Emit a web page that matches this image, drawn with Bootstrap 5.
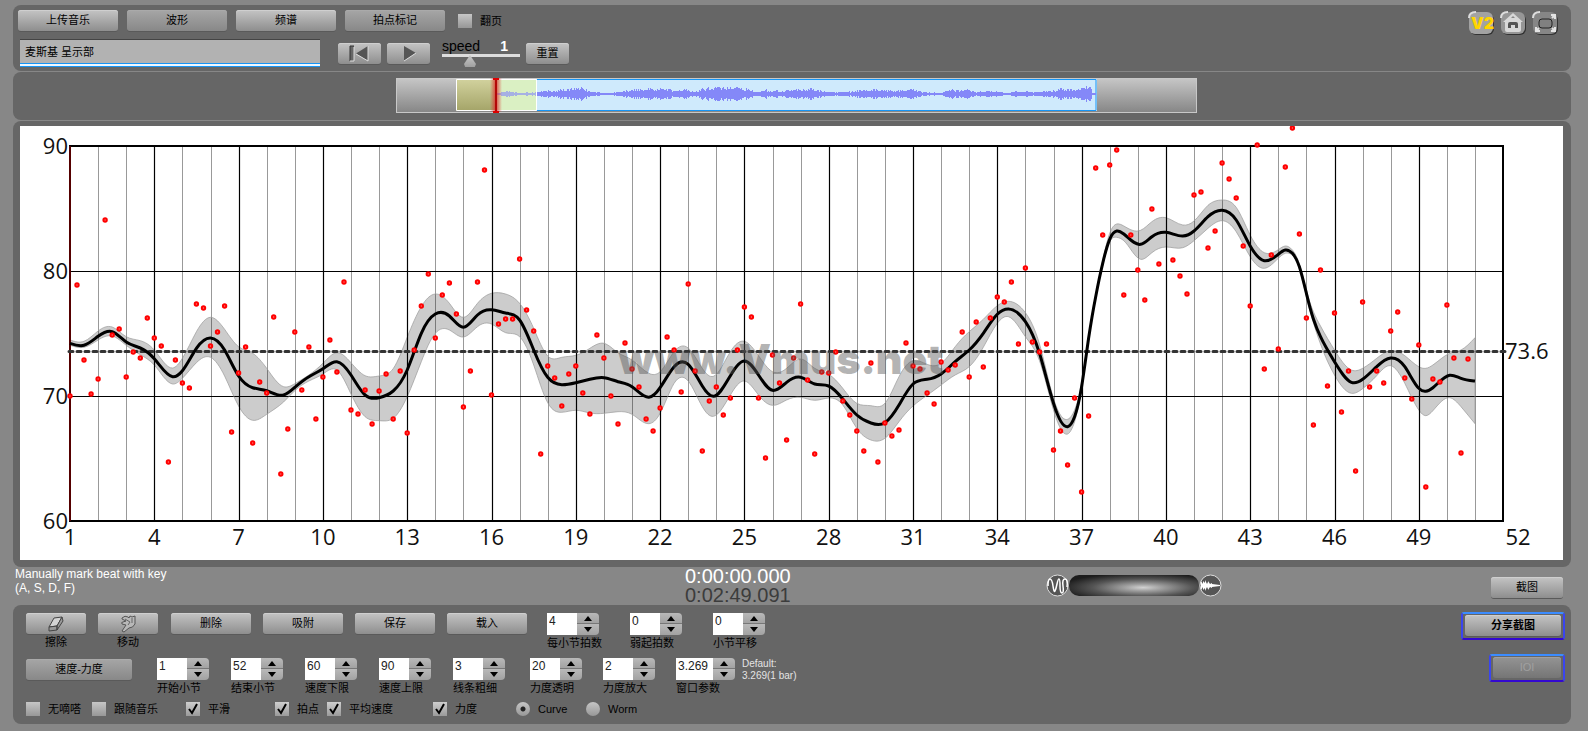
<!DOCTYPE html>
<html lang="zh-CN">
<head>
<meta charset="utf-8">
<meta name="viewport" content="width=device-width, initial-scale=1">
<title>Vmus.net</title>
<link href="https://cdn.jsdelivr.net/npm/bootstrap@5.3.0/dist/css/bootstrap.min.css" rel="stylesheet">
<style>
body{background:#878787;color:#000;font-family:"Liberation Sans","Noto Sans CJK SC",sans-serif;font-size:11px;line-height:16px;padding:5px 17px 7px 13px}
.panel{background:#666;border-radius:8px}
.panel+.panel{margin-top:1px}
.gbtn{height:21px;padding:0;border:0;border-radius:3px;font-size:11px;line-height:21px;color:#000;background:linear-gradient(#c4c4c4,#8e8e8e);box-shadow:inset 0 1px 0 #cfcfcf,0 1px 0 #5a5a5a;text-align:center;flex:none;display:flex;align-items:center;justify-content:center}
.gbtn.pressed{background:linear-gradient(#a6a6a6,#888);box-shadow:inset 0 1px 0 #aaa,0 1px 0 #5a5a5a}
.w100{width:100px}.w80{width:80px}.w60{width:60px}.w43{width:43px}.w106{width:106px}.w72{width:72px}
.transport{padding:5px 5px 4px}
.gap-9{gap:9px}
.player{gap:6px;padding-left:2px}
.title-box{width:300px;height:28px;margin-right:12px;padding:0 5px 5px;border:0;border-top:1px solid #444;border-bottom:1px solid #1795f5;box-shadow:inset 0 -2px 0 #f0f8ff,inset 0 -3px 0 #1795f5;background:#b2b2b2;border-radius:0;font-size:11px;color:#000}
.tick{appearance:none;width:14px;height:14px;margin:0;flex:none;background:linear-gradient(#c6c6c6,#979797);border:0}
.tick:checked{background:url("data:image/svg+xml,%3Csvg xmlns='http://www.w3.org/2000/svg' viewBox='0 0 14 14'%3E%3Cpath d='M3 7l3 4 5-9' fill='none' stroke='%23000' stroke-width='2'/%3E%3C/svg%3E"),linear-gradient(#cecece,#9a9a9a)}
.tick[type=radio]{border-radius:50%}
.tick[type=radio]:checked{background:radial-gradient(circle,#222 0 2px,transparent 3px),linear-gradient(#c6c6c6,#979797)}
.opt{display:flex;align-items:center;gap:8px;flex:none}
.speed{width:78px;height:28px;margin-left:6px;font-size:14px;line-height:14px}
.speed input{appearance:none;display:block;width:78px;height:14px;margin:0;background:linear-gradient(#ddd,#ddd) 0 1px/100% 3px no-repeat}
.speed input::-webkit-slider-thumb{appearance:none;width:12px;height:12px;margin-top:2px;background:linear-gradient(#c8c8c8,#a0a0a0);clip-path:polygon(50% 0,100% 75%,90% 100%,10% 100%,0 75%)}
.tools{gap:6px;padding:6px 13px 0 0}
.tool-ico{width:26px;height:24px;padding:0;border:0;background:none}
.overview{padding:6px 0 7px 8px}
.wave-box{width:52%;max-width:801px;flex:none}
.wave-box svg,.plot svg{display:block;width:100%;height:auto}
.plot-panel{padding:5px 8px 7px 7px}
.plot{background:#fff}
.status{display:grid;grid-template-columns:minmax(160px,672fr) minmax(110px,361fr) minmax(180px,445fr) auto;height:38px;align-items:start;padding-right:8px}
.note{font-size:12px;line-height:14px;padding-left:2px}
.clock{font-size:20px;line-height:19px}
.total{color:#3c3c3c}
.vol{padding-top:7px}
.knob{appearance:none;width:130px;height:21px;border-radius:10px;background:radial-gradient(ellipse at 57% 60%,#d2d2d2 0,#a0a0a0 18%,#555 48%,#1c1c1c 80%);margin:0}
.knob::-webkit-slider-thumb{appearance:none;width:1px;height:1px}
.shot{margin-top:10px}
.bottom{padding:8px 6px 7px 13px}
.row-a{gap:12px;height:45px}
.edit-btns{gap:12px;margin-left:1px}
.steps-a{margin-left:8px}
.row-b{height:43px}
.row-b>.gbtn{margin-top:1px}
.steps-b{margin-left:25px}
.steps-c{margin-left:3px}
.cell-a{width:83px;flex:none}
.cell-b{width:74px;flex:none}
.cell-c{width:73px;flex:none}
.cell-c:last-child{width:66px}
.spin{height:22px}
.spin input{width:30px;height:22px;border:0;border-radius:0;padding:0 0 6px 2px;font-size:12px;line-height:16px;color:#222;background:#fff}
.spin input.wide{width:37px}
.spin .updown{width:22px;display:flex;flex-direction:column}
.spin button{height:11px;border:0;padding:0;width:22px;background:linear-gradient(#b9b9b9,#a2a2a2);display:flex;align-items:center;justify-content:center}
.spin button:first-child{border-radius:0 4px 0 0;border-bottom:1px solid #777}
.spin button:last-child{border-radius:0 0 4px 0}
.cap{line-height:16px;white-space:nowrap;display:block}
.hint{font-size:10px;line-height:12px;color:#e4e4e4}
.row-c{display:grid;grid-template-columns:66px 94px 89px 52px 106px 83px 70px 70px;height:16px;align-items:center}
.share-col{gap:14px;margin-top:-1px}
.share{border:2px solid;border-color:#3b8cff #3a45f0 #3308d0;border-radius:3px;padding:1px 2px 2px;width:104px}
.share.small-one{width:76px}
.share .gbtn{width:100%}
.share .gbtn:disabled{background:linear-gradient(#949494,#757575);color:#a0a0a0;box-shadow:inset 0 1px 0 #a0a0a0}
</style>
</head>
<body>
<header class="panel d-flex justify-content-between">
  <div class="transport">
    <div class="d-flex align-items-center gap-9">
      <button class="gbtn w100" type="button">上传音乐</button>
      <button class="gbtn w100 pressed" type="button">波形</button>
      <button class="gbtn w100" type="button">频谱</button>
      <button class="gbtn w100 pressed" type="button">拍点标记</button>
      <label class="opt ms-1"><input class="tick" type="checkbox">翻页</label>
    </div>
    <div class="d-flex align-items-center mt-2 player">
      <input class="title-box" type="text" value="麦斯基 呈示部" aria-label="曲目">
      <button class="gbtn w43" type="button" aria-label="回到开头"><svg width="26" height="17" viewBox="0 0 26 17"><path d="M3 1h4v15H3z" fill="#666"/><path d="M3 16V1h4" fill="none" stroke="#333"/><path d="M21 1v15L9 8.500z" fill="#555"/><path d="M9 9l12 7V1M3 16h4V2" fill="none" stroke="#ddd"/></svg></button>
      <button class="gbtn w43" type="button" aria-label="播放"><svg width="26" height="17" viewBox="0 0 26 17"><path d="M8 1l12 7-12 8z" fill="#555"/><path d="M8 16l12-8" stroke="#ddd"/></svg></button>
      <div class="speed">
        <div class="d-flex"><label for="sp">speed</label><output class="text-white fw-bold ms-3 ps-1" for="sp">1</output></div>
        <input id="sp" type="range" min="0" max="3" step="0.1" value="1">
      </div>
      <button class="gbtn w43" type="button">重置</button>
    </div>
  </div>
  <nav class="d-flex tools" aria-label="工具">
    <button class="tool-ico" type="button"><svg width="26" height="24" viewBox="0 0 26 24"><rect x="2" y="3" width="24" height="21" rx="6" fill="#333"/><rect x="1" y="1" width="24" height="22" rx="6" fill="#a2a2a2"/><path d="M1 7q0-6 7-6" fill="none" stroke="#ddd" stroke-width="2"/><text x="3" y="18" font-family="Inter,sans-serif" font-weight="900" font-size="16" fill="#ffd500">V2</text></svg></button>
    <button class="tool-ico" type="button" aria-label="主页"><svg width="26" height="24" viewBox="0 0 26 24"><rect x="2" y="3" width="24" height="21" rx="6" fill="#333"/><rect x="1" y="1" width="24" height="22" rx="6" fill="#969696"/><path d="M1 7q0-6 7-6" fill="none" stroke="#ddd" stroke-width="2"/><path d="M3 11L13 2l10 9h-2v8q0 2-2 2H7q-2 0-2-2v-8z" fill="#d8d8d8"/><path d="M8 17v-4q0-2 2-2h6q2 0 2 2v4h-3v-3h-4v3z" fill="#555"/><path d="M11 7l2-2 2 2z" fill="#888"/></svg></button>
    <button class="tool-ico" type="button" aria-label="全屏"><svg width="26" height="24" viewBox="0 0 26 24"><rect x="2" y="3" width="24" height="21" rx="6" fill="#333"/><rect x="1" y="1" width="24" height="22" rx="6" fill="#868686"/><path d="M1 7q0-6 7-6" fill="none" stroke="#ddd" stroke-width="2"/><rect x="7" y="8" width="13" height="9" rx="3" fill="#808080" stroke="#222"/><path d="M19 4h4v4M4 16v4h4M23 16v4h-4M4 20l3-3M23 20l-3-3M23 4l-3 3" fill="none" stroke="#e4e4e4" stroke-width="2"/></svg></button>
  </nav>
</header>

<section class="panel d-flex justify-content-center overview">
  <div class="wave-box">
    <svg viewBox="0 0 801 35" aria-label="波形总览">
      <defs>
        <linearGradient id="ga" x2="0" y2="1"><stop stop-color="#c6c6c6"/><stop offset="1" stop-color="#868686"/></linearGradient>
        <linearGradient id="gy" x2="0" y2="1"><stop stop-color="#d2d29e"/><stop offset="1" stop-color="#a4a468"/></linearGradient>
        <linearGradient id="gr"><stop stop-color="#d33" stop-opacity="0"/><stop offset=".5" stop-color="#d22" stop-opacity=".8"/><stop offset="1" stop-color="#d33" stop-opacity="0"/></linearGradient>
      </defs>
      <rect x=".5" y=".5" width="800" height="34" fill="url(#ga)" stroke="#c8c8c8"/>
      <rect x="141" y="1" width="560" height="32" fill="#cfeafc"/>
      <path d="M141 1.500H700V32.500H141" fill="none" stroke="#1795f5" stroke-width="1"/>
      <rect x="100" y="1.500" width="41" height="31" fill="#daf0c4"/>
      <path id="wave" fill="#8488f8"/>
      <rect x="100" y="1.500" width="41" height="31" fill="#daf0c4" opacity=".4"/>
      <rect x="60" y="1" width="40" height="32" fill="url(#gy)"/>
      <path d="M60.500 1.500H140.500V32.500H60.500z" fill="none" stroke="#fff" stroke-width="1"/>
      <rect x="94" y="0" width="12" height="34" fill="url(#gr)"/>
      <path d="M100 0v35M97 1h6M97 34h6" stroke="#d00" stroke-width="2"/><path d="M100 2v31" stroke="#811"/>
    </svg>
  </div>
</section>

<main class="panel plot-panel">
  <div class="plot"><svg id="chart" viewBox="0 0 1543 434" role="img" aria-label="速度曲线"></svg></div>
</main>

<section class="status">
  <div class="text-white note">Manually mark beat with key<br>(A, S, D, F)</div>
  <div class="clock"><div class="text-white">0:00:00.000</div><div class="total">0:02:49.091</div></div>
  <div class="d-flex align-items-center vol">
    <svg width="23" height="23" viewBox="0 0 23 23"><circle cx="11.500" cy="11.500" r="10.500" fill="#555" stroke="#ddd"/><path d="M2 12Q2 5 4 5T7 12T9 17T11 10T13 5T14 12T16 19T17 12T19 5T21 13" fill="none" stroke="#fff" stroke-width="1.500"/></svg>
    <input class="knob" type="range" aria-label="混合">
    <svg width="23" height="23" viewBox="0 0 23 23"><circle cx="11.500" cy="11.500" r="10.500" fill="#555" stroke="#ddd"/><path d="M2 7l2 3V7l2 2V6l2 4V8l1 2V7l2 3 2-1v1l8 1v1l-8 1v1l-2-1-2 3v-3l-1 2v-2l-2 4v-3l-2 2v-3l-2 3z" fill="#fff"/></svg>
  </div>
  <button class="gbtn w72 shot" type="button">截图</button>
</section>

<footer class="panel d-flex justify-content-between bottom">
  <form>
    <div class="d-flex row-a">
      <div class="w60 text-center"><button class="gbtn w60" type="button" aria-labelledby="er"><svg width="18" height="16" viewBox="0 0 18 16"><path d="M2 11L7 2l8-1-5 9z" fill="#d4d4d4" stroke="#444"/><path d="M2 11l8-1v4l-8 1zM10 10l5-9 1 4-6 9z" fill="#999" stroke="#444"/></svg></button><span class="cap" id="er">擦除</span></div>
      <div class="w60 text-center"><button class="gbtn w60" type="button" aria-labelledby="mv"><svg width="20" height="18" viewBox="0 0 20 18"><path d="M4 3q3-3 6-1l1 1 1-2 2 1 3-1v8q-2 4-6 4l-5 4-2-1 4-6-4-1q-1-2 1-2l3-1-4-2z" fill="#b8b8b8" stroke="#555"/><path d="M7 4l5 3-2 3M14 3v5" fill="none" stroke="#666"/></svg></button><span class="cap" id="mv">移动</span></div>
      <div class="d-flex edit-btns">
        <button class="gbtn w80" type="button">删除</button>
        <button class="gbtn w80" type="button">吸附</button>
        <button class="gbtn w80" type="button">保存</button>
        <button class="gbtn w80" type="button">载入</button>
      </div>
      <div class="d-flex steps-a" data-steps='[["每小节拍数","4"],["弱起拍数","0"],["小节平移","0"]]' data-cell="cell-a"></div>
    </div>
    <div class="d-flex row-b">
      <button class="gbtn w106 pressed" type="button">速度-力度</button>
      <div class="d-flex steps-b" data-steps='[["开始小节","1"],["结束小节","52"],["速度下限","60"],["速度上限","90"],["线条粗细","3"]]' data-cell="cell-b"></div>
      <div class="d-flex steps-c" data-steps='[["力度透明","20"],["力度放大","2"],["窗口参数","3.269"]]' data-cell="cell-c"></div>
      <div class="hint">Default:<br>3.269(1 bar)</div>
    </div>
    <div class="row-c">
      <label class="opt"><input class="tick" type="checkbox">无嘀嗒</label>
      <label class="opt"><input class="tick" type="checkbox">跟随音乐</label>
      <label class="opt"><input class="tick" type="checkbox" checked>平滑</label>
      <label class="opt"><input class="tick" type="checkbox" checked>拍点</label>
      <label class="opt"><input class="tick" type="checkbox" checked>平均速度</label>
      <label class="opt"><input class="tick" type="checkbox" checked>力度</label>
      <label class="opt"><input class="tick" type="radio" name="kind" checked>Curve</label>
      <label class="opt"><input class="tick" type="radio" name="kind">Worm</label>
    </div>
  </form>
  <div class="d-flex flex-column align-items-end share-col">
    <div class="share"><button class="gbtn fw-bold" type="button">分享截图</button></div>
    <div class="share small-one"><button class="gbtn" type="button" disabled>IOI</button></div>
  </div>
</footer>

<script src="https://cdn.jsdelivr.net/npm/bootstrap@5.3.0/dist/js/bootstrap.bundle.min.js"></script>
<script>
// steppers
document.querySelectorAll('[data-steps]').forEach(function (box, b) {
  JSON.parse(box.dataset.steps).forEach(function (s, i) {
    var id = 'st' + b + i;
    box.insertAdjacentHTML('beforeend', '<div class="' + box.dataset.cell + '"><div class="spin d-flex"><input type="text" id="' + id + '" value="' + s[1] + '"' + (s[1].length > 3 ? ' class="wide"' : '') + '><span class="updown"><button type="button" aria-label="+"><svg width="8" height="5"><path d="M0 5L4 0l4 5z"/></svg></button><button type="button" aria-label="-"><svg width="8" height="5"><path d="M0 0h8L4 5z"/></svg></button></span></div><label class="cap" for="' + id + '">' + s[0] + '</label></div>');
  });
});

// overview waveform: [x, half height]
var env = [[100,1],[112,3],[125,1],[140,2],[150,3],[160,3],[165,4],[175,5],[185,6],[190,4],[195,2],[215,1],[222,2],[235,4],[250,5],[270,5],[280,3],[290,5],[298,2],[305,5],[312,6],[340,6],[352,5],[360,2],[370,4],[385,3],[400,4],[415,5],[430,2],[450,2],[470,4],[485,4],[500,3],[515,5],[525,2],[545,1],[552,4],[570,4],[580,2],[600,3],[612,1],[620,3],[640,2],[655,3],[665,5],[680,4],[690,7],[694,7],[696,1],[700,1]];
var w = '', k = 0, seed = 7;
for (var x = 100; x < 700; x++) {
  while (env[k + 1][0] <= x) k++;
  var a = env[k], c = env[k + 1], h = a[1] + (c[1] - a[1]) * (x - a[0]) / (c[0] - a[0]);
  seed = (seed * 137 + 29) % 251;
  h = Math.max(1, Math.round(h * (.6 + seed / 251 * .6)));
  w += 'M' + x + ' ' + (16 - h) + 'h1v' + 2 * h + 'h-1z';
}
document.getElementById('wave').setAttribute('d', w);

// tempo chart; band samples are [bar, mean, upper, lower] on a grid three times finer than the drawing
var X0 = 50, BAR = 28.1;
function px(m) { return X0 + (m - 1) * BAR; }
var band = [[1,670,660,676],[1.5,676,664,682],[2,649,633,660],[2.5,635,621,648],[3,666,650,676],[3.5,684,662,704],[4,716,690,735],[4.65,770,744,792],[5,752,715,775],[5.5,685,635,728],[6,654,592,712],[6.5,690,628,768],[7,768,680,858],[7.5,803,700,901],[8,812,745,883],[8.6,825,800,846],[9,802,791,812],[9.5,770,765,783],[10,746,730,762],[10.5,725,698,750],[11,765,728,822],[11.5,825,767,890],[12,833,768,902],[12.5,813,746,895],[13,750,652,830],[13.5,640,560,725],[14,582,522,640],[14.5,588,550,630],[15,622,592,651],[15.5,585,550,620],[16,569,520,612],[16.5,579,522,638],[17,600,550,650],[17.5,690,625,735],[18,772,708,848],[18.5,794,712,877],[19,788,706,871],[19.5,778,685,879],[20,773,670,880],[20.5,785,698,875],[21,800,720,883],[21.6,832,760,911],[22,803,755,880],[22.5,740,695,790],[23,733,684,783],[23.5,798,745,860],[23.9,829,769,889],[24.5,767,695,825],[25,723,664,783],[25.5,765,707,825],[26,811,755,856],[26.5,787,745,840],[27,772,717,832],[27.5,792,745,841],[28,798,763,834],[28.5,837,805,855],[29,885,850,925],[29.5,909,857,960],[30,908,850,955],[30.5,855,770,905],[31,792,722,858],[31.5,778,733,826],[32,762,730,795],[32.5,725,680,765],[33,690,635,740],[33.5,640,598,682],[34,583,557,610],[34.4,567,544,590],[35,605,578,650],[35.5,700,672,722],[36,850,835,870],[36.5,920,898,942],[36.75,890,870,905],[37,800,790,806],[37.25,655,650,660],[37.5,530,525,535],[37.75,430,422,437],[38,358,340,365],[38.25,333,312,352],[38.5,342,318,362],[39.1,373,331,418],[39.5,350,305,398],[40,337,293,381],[40.6,348,315,383],[41,333,303,362],[41.5,290,256,325],[42,271,240,302],[42.5,300,262,335],[43,378,345,410],[43.5,422,398,445],[44,403,389,415],[44.25,390,378,400],[44.5,400,390,406],[44.75,440,432,446],[45,520,512,530],[45.25,597,575,608],[45.5,650,618,672],[46,725,690,765],[46.6,787,750,820],[47,778,745,806],[47.5,740,715,767],[48,714,692,737],[48.5,740,707,790],[49,805,740,870],[49.25,814,745,887],[49.5,803,735,872],[50.1,766,700,833],[50.5,775,690,860],[51,783,653,911]];
function pts(i) { return band.map(function (r) { return [px(r[0]), (r[i] - 18) / 3]; }); }
// natural cubic spline through all points, written as Bezier segments
function curve(p) {
  var n = p.length, i, cp = [], dp = [], s = [], out = '';
  for (i = 0; i < n; i++) {
    var hl = i ? 1 / (p[i][0] - p[i - 1][0]) : 0, hr = i < n - 1 ? 1 / (p[i + 1][0] - p[i][0]) : 0;
    var r = 3 * ((i ? (p[i][1] - p[i - 1][1]) * hl * hl : 0) + (i < n - 1 ? (p[i + 1][1] - p[i][1]) * hr * hr : 0));
    var q = 2 * (hl + hr) - (i ? hl * cp[i - 1] : 0);
    cp[i] = hr / q;
    dp[i] = (r - (i ? hl * dp[i - 1] : 0)) / q;
  }
  s[n - 1] = dp[n - 1];
  for (i = n - 2; i >= 0; i--) s[i] = dp[i] - cp[i] * s[i + 1];
  for (i = 0; i < n - 1; i++) {
    var d = (p[i + 1][0] - p[i][0]) / 3;
    out += 'C' + [p[i][0] + d, p[i][1] + d * s[i], p[i + 1][0] - d, p[i + 1][1] - d * s[i + 1], p[i + 1][0], p[i + 1][1]].map(function (v) { return v.toFixed(1); }).join(' ');
  }
  return out;
}
// one dot per quarter bar
var dots = [270,159,234,268,253,94,209,203,251,226,232,192,212,220,336,234,257,262,178,182,220,206,180,306,247,221,317,256,267,191,348,303,206,264,221,293,251,214,246,156,284,288,264,298,265,248,293,245,307,224,180,148,212,169,157,188,281,245,156,44,269,198,193,193,133,184,205,328,240,252,280,248,240,267,288,209,232,270,298,217,243,261,293,305,282,211,224,266,158,245,325,275,261,289,272,224,181,191,272,332,229,257,314,232,178,254,328,246,247,226,275,289,305,325,237,336,297,310,304,217,240,243,267,278,236,244,239,206,251,196,241,192,171,176,156,218,142,216,226,218,324,305,339,272,366,290,42,109,39,24,169,109,144,174,83,138,null,134,150,168,69,66,122,105,37,53,72,120,180,19,243,129,223,41,2,108,192,299,144,260,187,286,245,345,176,261,245,257,205,186,252,273,219,361,253,256,179,232,327,233];
var g = '';
for (var m = 2; m < 52; m++) if (m % 3 !== 1) g += '<path d="M' + Math.round(px(m)) + '.5 20V395" stroke="#999"/>';
g += '<path d="M50 145.500H1483M50 270.500H1483" stroke="#000" stroke-width="1.200"/>';
var u = pts(2), l = pts(3).reverse(), mid = pts(1);
g += '<path d="M' + u[0] + curve(u) + 'L' + l[0] + curve(l) + 'z" fill="#000" fill-opacity=".2" stroke="#999" stroke-width=".7"/>';
for (m = 4; m < 52; m += 3) g += '<path d="M' + Math.round(px(m)) + '.500 20V395" stroke="#000" stroke-width="1.200"/>';
g += '<path d="M50 20H1483V395H50z" fill="none" stroke="#000" stroke-width="2"/><path d="M50 20V395" stroke="#a00" stroke-width="1"/>';
g += '<path d="M49 225.500H1487" stroke="#333" stroke-width="3" stroke-linecap="round" stroke-dasharray="4 4"/>';
g += '<path d="M' + mid[0] + curve(mid) + '" fill="none" stroke="#000" stroke-width="3"/>';
dots.forEach(function (y, i) { if (y !== null) g += '<circle cx="' + px(1 + i / 4).toFixed(1) + '" cy="' + y + '" r="1.700" fill="#f77" stroke="#f00" stroke-width="2"/>'; });
g += '<text x="761" y="248" text-anchor="middle" font-family="Inter,sans-serif" font-weight="900" font-size="41" fill="#555" fill-opacity=".45">www.Vmus.net</text>';
g += '<g font-family="Open Sans,sans-serif" font-size="22" fill="#111">';
[90, 80, 70, 60].forEach(function (v, i) { g += '<text x="48" y="' + (28 + 125 * i) + '" text-anchor="end">' + v + '</text>'; });
for (m = 1; m < 52; m += 3) g += '<text x="' + px(m) + '" y="419" text-anchor="middle">' + m + '</text>';
g += '<text x="1498" y="419" text-anchor="middle">52</text><text x="1485" y="233">73.6</text></g>';
document.getElementById('chart').innerHTML = g;
</script>
</body>
</html>
